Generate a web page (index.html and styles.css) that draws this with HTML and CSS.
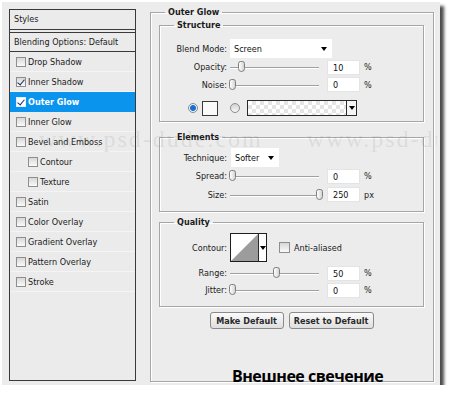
FILE: index.html
```html
<!DOCTYPE html>
<html lang="ru">
<head>
    <meta charset="UTF-8">
    <title>Outer Glow</title>
    <link rel="stylesheet" href="styles.css">
</head>
<body>

    <div class="dialog">
        <div class="styles-panel">
            <div class="panel-head">Styles</div>
            <div class="panel-blend">Blending Options: Default</div>
            <ul class="fx-list">
                <li><span class="cb"></span>Drop Shadow</li>
                <li><span class="cb on"></span>Inner Shadow</li>
                <li class="sel"><span class="cb on"></span>Outer Glow</li>
                <li><span class="cb"></span>Inner Glow</li>
                <li><span class="cb"></span>Bevel and Emboss</li>
                <li class="sub"><span class="cb"></span>Contour</li>
                <li class="sub"><span class="cb"></span>Texture</li>
                <li><span class="cb"></span>Satin</li>
                <li><span class="cb"></span>Color Overlay</li>
                <li><span class="cb"></span>Gradient Overlay</li>
                <li><span class="cb"></span>Pattern Overlay</li>
                <li><span class="cb"></span>Stroke</li>
            </ul>
        </div>

        <fieldset class="group outer">
            <legend>Outer Glow</legend>

            <fieldset class="group structure">
                <legend>Structure</legend>
                <div class="row h19">
                    <span class="lbl">Blend Mode:</span>
                    <div class="select blend">Screen<i class="arr"></i></div>
                </div>
                <div class="row h18">
                    <span class="lbl">Opacity:</span>
                    <div class="slider"><span class="track"></span><span class="thumb" style="left: calc((100% - 7px) * 0.1)"></span></div>
                    <div class="num">10</div>
                    <span class="unit">%</span>
                </div>
                <div class="row h17">
                    <span class="lbl">Noise:</span>
                    <div class="slider"><span class="track"></span><span class="thumb" style="left: 0"></span></div>
                    <div class="num">0</div>
                    <span class="unit">%</span>
                </div>
                <div class="row color-row">
                    <span class="radio on"></span>
                    <span class="swatch"></span>
                    <span class="radio"></span>
                    <div class="gradient"><span class="checker"></span><span class="drop"><i class="arr"></i></span></div>
                </div>
            </fieldset>

            <fieldset class="group elements">
                <legend>Elements</legend>
                <div class="row h19">
                    <span class="lbl">Technique:</span>
                    <div class="select technique">Softer<i class="arr"></i></div>
                </div>
                <div class="row h18">
                    <span class="lbl">Spread:</span>
                    <div class="slider"><span class="track"></span><span class="thumb" style="left: 0"></span></div>
                    <div class="num">0</div>
                    <span class="unit">%</span>
                </div>
                <div class="row h19">
                    <span class="lbl">Size:</span>
                    <div class="slider"><span class="track"></span><span class="thumb" style="left: calc(100% - 7px)"></span></div>
                    <div class="num">250</div>
                    <span class="unit">px</span>
                </div>
            </fieldset>

            <fieldset class="group quality">
                <legend>Quality</legend>
                <div class="row contour-row">
                    <span class="lbl">Contour:</span>
                    <div class="contour">
                        <svg width="27" height="27" viewBox="0 0 27 27">
                            <rect width="27" height="27" fill="#fff"/>
                            <polygon points="0,27 27,0 27,27" fill="#9c9c9c"/>
                        </svg>
                        <span class="drop"><i class="arr"></i></span>
                    </div>
                    <span class="cb big"></span>
                    <span class="aa">Anti-aliased</span>
                </div>
                <div class="row range-row">
                    <span class="lbl">Range:</span>
                    <div class="slider"><span class="track"></span><span class="thumb" style="left: calc((100% - 7px) * 0.5)"></span></div>
                    <div class="num">50</div>
                    <span class="unit">%</span>
                </div>
                <div class="row h16">
                    <span class="lbl">Jitter:</span>
                    <div class="slider"><span class="track"></span><span class="thumb" style="left: 0"></span></div>
                    <div class="num">0</div>
                    <span class="unit">%</span>
                </div>
            </fieldset>

            <div class="buttons">
                <button class="make">Make Default</button>
                <button class="reset">Reset to Default</button>
            </div>
        </fieldset>

        <div class="watermark">
            <span>www.psd-dude.com</span>
            <span>www.psd-dude.com</span>
        </div>

        <div class="caption">Внешнее свечение</div>
    </div>

</body>
</html>
```

FILE: styles.css
```css
body {
    margin: 0;
    background: #fff;
    font-family: "DejaVu Sans Condensed", "DejaVu Sans", sans-serif;
    font-stretch: condensed;
    font-size: 9px;
    color: #1a1a1a;
}

.dialog {
    position: relative;
    display: flex;
    align-items: flex-start;
    width: 438px;
    height: 383px;
    margin: 2px 0 0 2px;
    padding: 5px 0 0 7px;
    box-sizing: border-box;
    background: #ececec;
    box-shadow: 4px 4px 3px rgba(0, 0, 0, 0.7);
}

/* left list */

.styles-panel {
    width: 127px;
    height: 372px;
    margin: 2px 14px 0 0;
    border: 1px solid #3a3a3a;
    box-sizing: border-box;
    background: #ebebeb;
    flex-shrink: 0;
}

.panel-head {
    height: 20px;
    line-height: 19px;
    padding-left: 4px;
    border-bottom: 1px solid #3a3a3a;
    box-sizing: border-box;
    margin-bottom: 2px;
}

.panel-blend {
    height: 20px;
    line-height: 18px;
    padding-left: 4px;
    border-top: 1px solid #3a3a3a;
    border-bottom: 1px solid #3a3a3a;
    box-sizing: border-box;
}

.fx-list {
    list-style: none;
    margin: 0;
    padding: 0;
}

.fx-list li {
    display: flex;
    align-items: center;
    height: 20px;
    padding-left: 6px;
    border-bottom: 1px solid #f4f4f4;
    box-sizing: border-box;
}

.fx-list li.sub {
    padding-left: 18px;
}

.fx-list li.sel {
    background: #0b94ee;
    color: #fff;
    font-weight: bold;
    border-bottom-color: #0b94ee;
}

.cb {
    position: relative;
    width: 10px;
    height: 10px;
    margin-right: 2px;
    border: 1px solid #8e8e8e;
    box-sizing: border-box;
    background: linear-gradient(#d8d8d8, #fafafa);
    flex-shrink: 0;
}

.sel .cb {
    background: #fff;
    border-color: #dfefff;
}

.cb.on::after {
    content: "";
    position: absolute;
    left: 2px;
    top: 0;
    width: 3px;
    height: 6px;
    border-right: 1.5px solid #1b2b66;
    border-bottom: 1.5px solid #1b2b66;
    transform: rotate(40deg);
}

.cb.big {
    width: 11px;
    height: 11px;
    margin: 0 0 0 12px;
}

/* right side */

.group {
    margin: 0;
    padding: 0;
    min-width: 0;
    border: 1px solid #a6a6a6;
    box-shadow: inset 1px 1px 0 #fff, 1px 1px 0 #fff;
}

.group legend {
    padding: 0 3px;
    margin-left: 14px;
    font-weight: bold;
    line-height: 11px;
}

.outer {
    width: 284px;
    height: 375px;
    padding: 0 9px 0 8px;
    box-sizing: border-box;
    flex-shrink: 0;
}

.outer > legend {
    margin-left: 6px;
}

.structure {
    margin-top: 2px;
    padding: 8px 0 5px;
}

.elements {
    margin-top: 10px;
    padding: 5px 0 7px;
}

.quality {
    margin-top: 5px;
    padding: 5px 0 8px;
}

.row {
    display: flex;
    align-items: center;
}

.h16 { height: 16px; }
.h17 { height: 17px; }
.h18 { height: 18px; }
.h19 { height: 19px; }

.lbl {
    width: 67px;
    text-align: right;
    flex-shrink: 0;
}

.select {
    display: flex;
    align-items: center;
    height: 19px;
    margin-left: 3px;
    padding-left: 4px;
    box-sizing: border-box;
    background: #fff;
    color: #111;
}

.select.blend {
    width: 102px;
}

.select.technique {
    width: 48px;
    margin-left: 4px;
}

.select .arr {
    margin: 1px 5px 0 auto;
}

.arr {
    display: block;
    width: 0;
    height: 0;
    border-left: 3.5px solid transparent;
    border-right: 3.5px solid transparent;
    border-top: 4px solid #000;
}

.slider {
    position: relative;
    width: 94px;
    height: 12px;
    margin-left: 2px;
}

.track {
    position: absolute;
    left: 1px;
    right: 4px;
    top: 6px;
    height: 1px;
    background: #a0a0a0;
    box-shadow: 0 1px 0 #fff;
}

.thumb {
    position: absolute;
    top: 0;
    width: 7px;
    height: 11px;
    border: 1px solid #7d7d7d;
    border-radius: 3px 3px 4px 4px;
    box-sizing: border-box;
    background: linear-gradient(90deg, #fff, #d4d4d4);
}

.num {
    width: 33px;
    height: 15px;
    margin-left: 4px;
    padding-left: 5px;
    line-height: 15px;
    box-sizing: border-box;
    background: #fff;
    border: 1px solid #e4e4e4;
    color: #111;
}

.unit {
    margin-left: 4px;
}

.color-row {
    height: 16px;
    margin-top: 7px;
    padding-left: 28px;
}

.radio {
    width: 10px;
    height: 10px;
    border-radius: 50%;
    border: 1px solid #8c8c8c;
    box-sizing: border-box;
    background: linear-gradient(#d2d2d2, #f7f7f7);
    margin-left: 12px;
}

.radio.on {
    margin-left: 0;
    background: radial-gradient(circle, #1c6fcf 0 2.5px, #e9f2fb 3.5px);
}

.swatch {
    width: 16px;
    height: 15px;
    margin-left: 4px;
    border: 1px solid #3a3a3a;
    box-sizing: border-box;
    background: #fafafa;
}

.gradient {
    display: flex;
    width: 110px;
    height: 16px;
    margin-left: 7px;
    border: 1px solid #2a2a2a;
    box-sizing: border-box;
}

.checker {
    flex: 1;
    background-color: #fff;
    background-image: conic-gradient(#e4e4e4 25%, #fff 0 50%, #e4e4e4 0 75%, #fff 0);
    background-size: 8px 8px;
}

.drop {
    display: flex;
    align-items: center;
    justify-content: center;
    width: 9px;
    border-left: 1px solid #2a2a2a;
    background: #f4f4f4;
}

.contour-row {
    height: 29px;
}

.contour {
    display: flex;
    width: 37px;
    height: 29px;
    margin-left: 3px;
    border: 1px solid #1e1e1e;
    box-sizing: border-box;
}

.contour svg {
    display: block;
}

.contour .drop {
    flex: 1;
    background: #fff;
}

.aa {
    margin-left: 4px;
}

.range-row {
    height: 18px;
    margin-top: 2px;
}

.buttons {
    display: flex;
    justify-content: center;
    gap: 5px;
    margin-top: 5px;
}

.buttons button {
    height: 17px;
    padding: 0;
    font-family: inherit;
    font-stretch: condensed;
    font-size: 9px;
    font-weight: bold;
    color: #2a2a2a;
    border: 1px solid #8a8a8a;
    border-radius: 3px;
    background: linear-gradient(#fbfbfb, #dedede);
}

.buttons .make {
    width: 74px;
}

.buttons .reset {
    width: 85px;
}

/* overlays */

.watermark {
    position: absolute;
    left: 37px;
    top: 124px;
    width: 398px;
    overflow: hidden;
    display: flex;
    gap: 44px;
    font-family: "Liberation Serif", serif;
    font-stretch: normal;
    font-size: 24px;
    letter-spacing: 2px;
    color: rgba(110, 110, 110, 0.15);
    white-space: nowrap;
    pointer-events: none;
}

.caption {
    position: absolute;
    left: 230px;
    top: 366px;
    font-family: "Open Sans", sans-serif;
    font-stretch: normal;
    font-weight: bold;
    font-size: 16px;
    line-height: 16px;
    letter-spacing: -0.5px;
    color: #000;
}
```
